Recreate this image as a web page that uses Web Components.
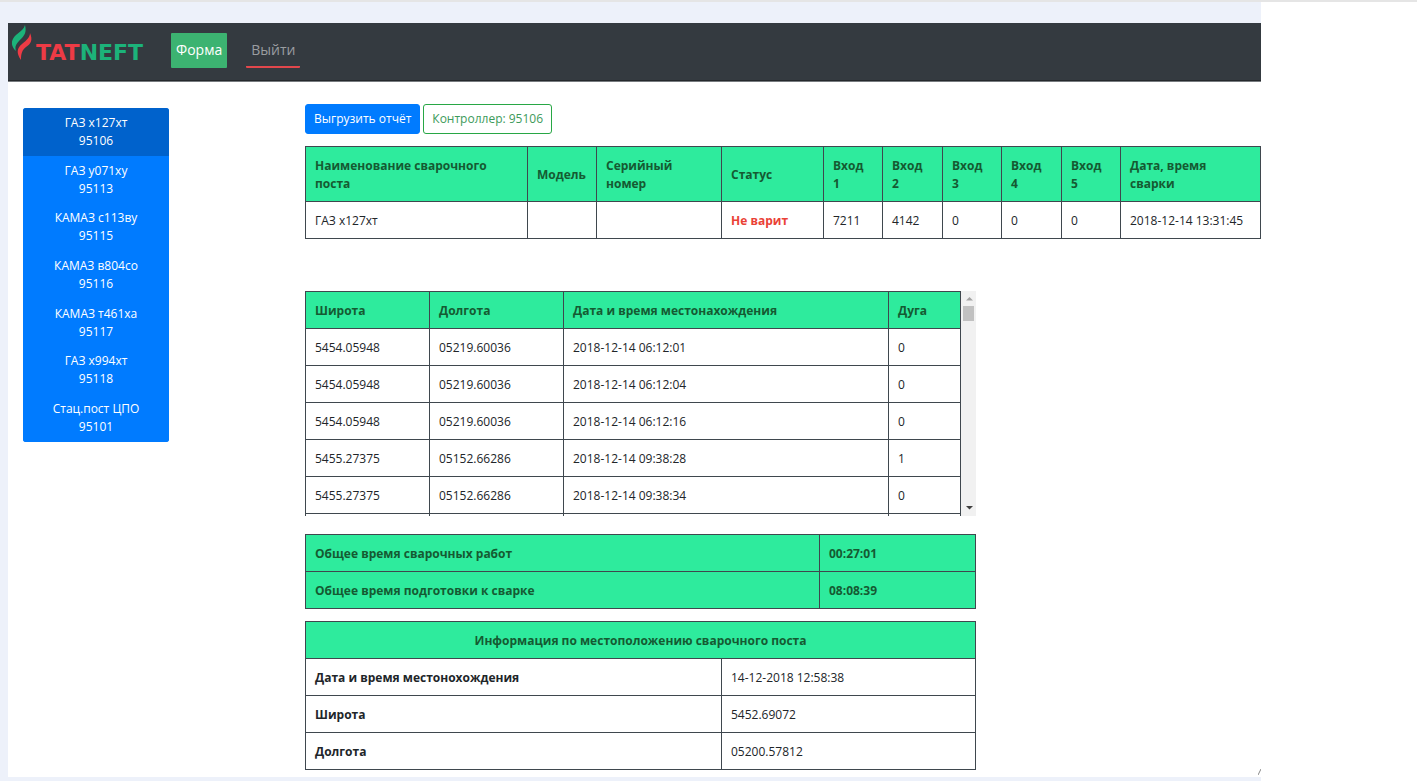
<!DOCTYPE html>
<html lang="ru">
<head>
<meta charset="utf-8">
<title>Татнефть — сварочные посты</title>
<style>
  body {
    margin: 0;
    background: #fff;
    color: #212529;
    font: 12px/18px "Open Sans", "Noto Sans", sans-serif;
  }
</style>
</head>
<body>
<weld-app></weld-app>
<script>
const define = (name, html, setup) => customElements.define(name, class extends HTMLElement {
  connectedCallback() {
    if (this.shadowRoot) return;
    const t = document.createElement('template');
    t.innerHTML = typeof html === 'function' ? html(this) : html;
    this.attachShadow({ mode: 'open' }).append(t.content.cloneNode(true));
    if (setup) setup(this);
  }
});

const tableCss = `
  :host { display: block; }
  table { width: 100%; border-collapse: collapse; table-layout: fixed; }
  th, td { border: 1px solid #3f474e; padding: 10px 9px 8px; text-align: left; vertical-align: middle; overflow-wrap: break-word; height: 18px; }
  .green th, .green td, thead th { background: #2eeb9d; color: #155a32; font-weight: 700; }
`;

/* Logo: two-tone flame and word mark */
define('brand-logo', `
  <style>
    :host { display: block; }
    a { display: block; }
    svg { display: block; }
    text { font: 700 22px "DejaVu Sans", sans-serif; }
  </style>
  <a href="#" aria-label="TATNEFT">
    <svg width="150" height="46" viewBox="0 0 150 46">
      <path d="M13 0C15 8 12 11 7 16C3 20 3 23 4 26C-2 20-1 15 4 10C9 6 12 4 13 0Z" fill="#1cb37a"/>
      <path d="M18 8C21 15 19 19 14 22C10 25 9 29 9 35C4 28 5 23 10 19C15 15 18 12 18 8Z" fill="#ee3b45"/>
      <text x="24" y="35" fill="#ee3b45">TAT<tspan fill="#1cb37a">NEFT</tspan></text>
    </svg>
  </a>`);

define('nav-item', el => `
  <style>
    :host { display: block; }
    a { display: block; padding: 5px 5px 4px; font-size: 14px; line-height: 24px; text-decoration: none; color: #9a9da0; border-bottom: 2px solid #e2474c; border-radius: 1px; }
    :host([active]) a { background: #3cb371; color: #fff; border-bottom-color: #3cb371; }
  </style>
  <a href="#"><slot></slot></a>`);

define('app-nav', `
  <style>
    :host { display: block; background: #343a40; border-bottom: 1px solid #777b7f; box-shadow: inset 0 -1px #25282c; }
    nav { display: flex; height: 58px; align-items: flex-start; padding-left: 4px; }
    brand-logo { width: 159px; padding-top: 2px; box-sizing: border-box; }
    .items { display: flex; gap: 19px; padding-top: 10px; }
  </style>
  <nav>
    <brand-logo></brand-logo>
    <div class="items"><nav-item active>Форма</nav-item><nav-item>Выйти</nav-item></div>
  </nav>`);

const devices = [['ГАЗ х127хт', 95106], ['ГАЗ у071ху', 95113], ['КАМАЗ с113ву', 95115], ['КАМАЗ в804со', 95116], ['КАМАЗ т461ха', 95117], ['ГАЗ х994хт', 95118], ['Стац.пост ЦПО', 95101]];
define('device-list', `
  <style>
    :host { display: flex; flex-direction: column; min-height: 334px; border-radius: 3px; overflow: hidden; background: #007bff; }
    button { flex: 1; border: 0; margin: 0; padding: 0; background: #007bff; color: #fff; font: inherit; }
    button[aria-pressed=true] { background: #0062cc; }
    span { display: block; }
  </style>
  ${devices.map(([n, id], i) => `<button type="button" aria-pressed="${i === 0}"><span>${n}</span><span>${id}</span></button>`).join('')}`);

define('action-button', `
  <style>
    :host { display: block; }
    button { display: block; padding: 5px 8px; border: 1px solid #007bff; border-radius: 3px; background: #007bff; color: #fff; font: inherit; }
    :host([outline]) button { background: #fff; border-color: #28a745; color: #3d9a5a; }
  </style>
  <button type="button"><slot></slot></button>`);

define('post-table', `
  <style>${tableCss} .status { color: #ea4136; font-weight: 700; }</style>
  <table>
    <colgroup><col style="width:222px"><col style="width:69px"><col style="width:125px"><col style="width:102px"><col style="width:59px"><col style="width:60px"><col style="width:59px"><col style="width:60px"><col style="width:59px"><col></colgroup>
    <thead><tr><th>Наименование сварочного поста</th><th style="white-space:nowrap">Модель</th><th>Серийный номер</th><th>Статус</th><th>Вход<br>1</th><th>Вход<br>2</th><th>Вход<br>3</th><th>Вход<br>4</th><th>Вход<br>5</th><th>Дата, время<br>сварки</th></tr></thead>
    <tbody><tr><td>ГАЗ х127хт</td><td></td><td></td><td class="status">Не варит</td><td>7211</td><td>4142</td><td>0</td><td>0</td><td>0</td><td>2018-12-14 13:31:45</td></tr></tbody>
  </table>`);

const track = [
  ['5454.05948', '05219.60036', '2018-12-14 06:12:01', 0],
  ['5454.05948', '05219.60036', '2018-12-14 06:12:04', 0],
  ['5454.05948', '05219.60036', '2018-12-14 06:12:16', 0],
  ['5455.27375', '05152.66286', '2018-12-14 09:38:28', 1],
  ['5455.27375', '05152.66286', '2018-12-14 09:38:34', 0],
  ['', '', '', '']
];
define('track-table', `
  <style>${tableCss}
    :host { display: flex; height: 225px; overflow: hidden; }
    .view { flex: 1; overflow: hidden; }
    .bar { width: 15px; background: #f1f1f1; display: flex; flex-direction: column; align-items: center; }
    .bar svg { display: block; }
    .thumb { width: 11px; height: 15px; background: #c1c1c1; }
    .space { flex: 1; }
  </style>
  <div class="view"><table>
    <colgroup><col style="width:124px"><col style="width:134px"><col><col style="width:72px"></colgroup>
    <thead><tr><th>Широта</th><th>Долгота</th><th>Дата и время местонахождения</th><th>Дуга</th></tr></thead>
    <tbody>${track.map(r => `<tr>${r.map(c => `<td>${c}</td>`).join('')}</tr>`).join('')}</tbody>
  </table></div>
  <div class="bar" aria-hidden="true">
    <svg width="15" height="15"><path d="M5 9.5L8.5 6L12 9.5Z" fill="#a3a3a3"/></svg>
    <div class="thumb"></div><div class="space"></div>
    <svg width="15" height="15"><path d="M5 5L8.5 8.5L12 5Z" fill="#404040"/></svg>
  </div>`);

define('totals-table', `
  <style>${tableCss}</style>
  <table class="green"><colgroup><col><col style="width:156px"></colgroup>
    <tbody><tr><th scope="row">Общее время сварочных работ</th><td>00:27:01</td></tr>
    <tr><th scope="row">Общее время подготовки к сварке</th><td>08:08:39</td></tr></tbody>
  </table>`);

define('location-table', `
  <style>${tableCss} thead th { text-align: center; }</style>
  <table><colgroup><col><col style="width:254px"></colgroup>
    <thead><tr><th colspan="2">Информация по местоположению сварочного поста</th></tr></thead>
    <tbody><tr><th scope="row">Дата и время местонохождения</th><td>14-12-2018 12:58:38</td></tr>
    <tr><th scope="row">Широта</th><td>5452.69072</td></tr>
    <tr><th scope="row">Долгота</th><td>05200.57812</td></tr></tbody>
  </table>`);

define('weld-app', `
  <style>
    :host { display: block; border-top: 2px solid #e5e5e5; }
    .page { width: 89%; box-sizing: border-box; padding: 21px 0 4px 8px; background: #edf1fa; }
    .panel { position: relative; background: #fff; }
    .body { display: grid; grid-template-columns: 146px minmax(0, 1fr); column-gap: 136px; align-items: start; padding: 22px 0 7px 15px; }
    device-list { margin-top: 4px; }
    .actions { display: flex; gap: 3px; margin-bottom: 12px; }
    .stack { display: flex; flex-direction: column; max-width: 671px; margin-top: 52px; }
    totals-table { margin: 18px 0 12px; }
    .grip { position: absolute; right: 0; bottom: 2px; display: block; }
  </style>
  <div class="page"><div class="panel">
    <app-nav></app-nav>
    <div class="body">
      <device-list></device-list>
      <main>
        <div class="actions"><action-button>Выгрузить отчёт</action-button><action-button outline>Контроллер: 95106</action-button></div>
        <post-table></post-table>
        <div class="stack">
          <track-table></track-table>
          <totals-table></totals-table>
          <location-table></location-table>
        </div>
      </main>
    </div>
    <svg class="grip" width="3" height="6" aria-hidden="true"><path d="M0 6L3 0" stroke="#888"/></svg>
  </div></div>`);
</script>
</body>
</html>
